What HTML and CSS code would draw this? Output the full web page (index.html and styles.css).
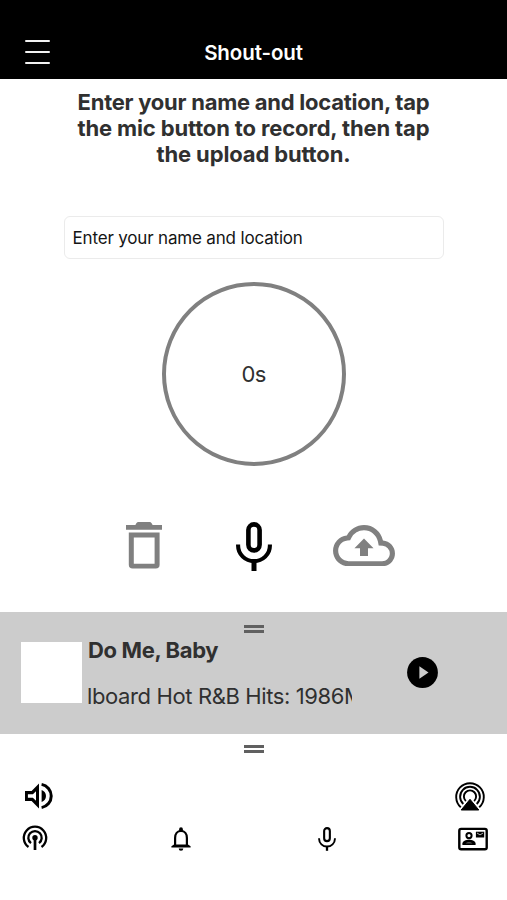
FILE: index.html
```html
<!DOCTYPE html>
<html lang="en">
<head>
<meta charset="utf-8">
<title>Shout-out</title>
<link rel="stylesheet" href="styles.css">
</head>
<body>
<header class="header">
  <div class="menu"><span></span><span></span><span></span></div>
  <h1 class="title">Shout-out</h1>
</header>
<main class="recorder">
  <p class="prompt"><span class="l1">Enter your name and location, tap</span><br><span class="l2">the mic button to record, then tap</span><br><span class="l3">the upload button.</span></p>
  <div class="field"><span>Enter your name and location</span></div>
  <div class="dial"><span>0s</span></div>
  <div class="controls">
    <svg class="trash" viewBox="0 0 36 47"><path fill="#808080" d="M0 3h9.4c1-2.4 2.2-2.9 3.4-2.9h10.4c1.2 0 2.4.5 3.4 2.9H36v4.8H0z"/><path fill="#808080" fill-rule="evenodd" d="M2.8 10.5h30.8v32.2a3.8 3.8 0 0 1-3.8 3.8H6.6a3.8 3.8 0 0 1-3.8-3.8zM7.8 15.5v26.2h20.8V15.5z"/></svg>
    <svg class="mic" viewBox="0 0 36 49" fill="none" stroke="#000"><rect x="12.4" y="2.4" width="11.2" height="26" rx="5.6" stroke-width="4.6"/><path d="M2.1 22.5v1.3a15.9 15.3 0 0 0 31.8 0v-1.3" stroke-width="4.1"/><path d="M18 38v11" stroke-width="5"/></svg>
    <svg class="cloud" viewBox="0 0 24 16"><path fill="#808080" d="M19.35 6.04A7.49 7.49 0 0 0 12 0C9.11 0 6.6 1.64 5.35 4.04A5.994 5.994 0 0 0 0 10c0 3.31 2.69 6 6 6h13c2.76 0 5-2.24 5-5 0-2.64-2.05-4.78-4.65-4.96zM19 14H6c-2.21 0-4-1.79-4-4 0-2.05 1.53-3.76 3.56-3.97l1.07-.11.5-.95A5.469 5.469 0 0 1 12 2c2.62 0 4.88 1.86 5.39 4.43l.3 1.5 1.53.11A2.98 2.98 0 0 1 22 11c0 1.65-1.35 3-3 3zM8.3 9h2.15v3h3.1V9h2.15L12 5.2z"/></svg>
  </div>
</main>
<section class="player">
  <div class="handle"></div>
  <div class="art"></div>
  <div class="track"><div class="song">Do Me, Baby</div><div class="marquee"><span>lboard Hot R&amp;B Hits: 1986M</span></div></div>
  <svg class="play" viewBox="0 0 31 31"><circle cx="15.5" cy="15.5" r="15.4"/><path fill="#ccc" d="M12.4 9.2v12.6l9.1-6.3z"/></svg>
</section>
<footer class="dock">
  <div class="handle"></div>
  <div class="row top">
    <svg class="speaker" width="28" height="28" viewBox="0 0 28 28"><path d="M0 9H6.6L14 1.6v25L6.6 19H0z"/><path d="M2.9 12.2h5L11 9.2v9.6l-3.1-3H2.9z" fill="#fff"/><path d="M16.6 8a6.6 6.6 0 0 1 4.4 6 6.6 6.6 0 0 1-4.4 6z"/><path d="M16.6 2.4a11.8 11.8 0 0 1 0 23.2" fill="none" stroke="#000" stroke-width="3"/></svg>
    <svg class="airplay" width="30" height="29" viewBox="0 0 30 29" fill="none" stroke="#000" stroke-width="1.9"><path d="M5.8 25.3a13.8 13.8 0 1 1 18.4 0"/><path d="M8.3 22a9.9 9.9 0 1 1 13.4 0"/><path d="M10.9 19a6.1 6.1 0 1 1 8.2 0"/><path d="M15 17.3L23.8 28H6.2z" fill="#000" stroke-width="1"/></svg>
  </div>
  <div class="row tabs">
    <svg class="podcast" width="26" height="26" viewBox="0 0 26 26" fill="none" stroke="#000"><path d="M6.5 22a11.2 11.2 0 1 1 13 0" stroke-width="2.3"/><path d="M9 18.2a6.7 6.7 0 1 1 8 0" stroke-width="2.3"/><circle cx="13" cy="12.7" r="2.7" fill="#000" stroke="none"/><path d="M13 13v12" stroke-width="2.7"/></svg>
    <svg class="bell" width="20" height="24" viewBox="0 0 20 24"><path d="M4.1 19V11c0-4 2.2-7 5.9-7s5.9 3 5.9 7v8" fill="none" stroke="#000" stroke-width="2.2"/><path d="M8.1 4V2.2a1.9 1.9 0 0 1 3.8 0V4zM.4 19.2l2.6-1.8h14l2.6 1.8v1.2H.4zM7.7 21.5h4.6a2.3 2.3 0 0 1-4.6 0z"/></svg>
    <svg class="minimic" width="18" height="24" viewBox="0 0 36 48" fill="none" stroke="#000"><rect x="12.3" y="2.2" width="11.4" height="26" rx="5.7" stroke-width="4.2"/><path d="M2.2 22.5v1.3a15.8 15.3 0 0 0 31.6 0v-1.3" stroke-width="3.8"/><path d="M18 38v9.6" stroke-width="4.6"/></svg>
    <svg class="contact" width="30" height="24" viewBox="0 0 30 24"><rect x="1.3" y="1.9" width="27.4" height="20.4" rx="1.8" fill="none" stroke="#000" stroke-width="2.4"/><circle cx="11" cy="8.6" r="2.6" fill="none" stroke="#000" stroke-width="2"/><path d="M4.4 18.1v-1.6c0-2.5 3.6-3.8 6.6-3.8s6.6 1.3 6.6 3.8v1.6z"/><path d="M7.6 16.3c1-1.1 5.8-1.1 6.8 0z" fill="#999"/><path d="M17.9 4.7h8.3v5.8h-8.3z"/><path d="M19 6l3 1.9L25.1 6" fill="none" stroke="#ddd" stroke-width=".8"/></svg>
  </div>
</footer>
</body>
</html>
```

FILE: styles.css
```css
* { box-sizing: border-box; }
body { margin: 0; width: 507px; height: 900px; overflow: hidden; background: #fff; color: #303030; font-family: Inter, "Liberation Sans", sans-serif; display: flex; flex-direction: column; }
svg { display: block; flex: none; }
.header { height: 79px; flex: none; background: #000; color: #fff; display: grid; grid-template-columns: 75px 1fr 75px; padding-top: 40px; }
.menu { display: flex; flex-direction: column; gap: 9px; padding-left: 25px; }
.menu span { width: 25px; height: 2px; background: #f2f2f2; border-radius: 1px; }
.title { margin: 0; font-size: 20.5px; line-height: 26px; font-weight: 600; letter-spacing: -0.1px; text-align: center; }
.recorder { height: 533px; flex: none; display: flex; flex-direction: column; align-items: center; }
.prompt { margin: 10px 0 0; font-size: 22px; line-height: 26px; font-weight: 700; text-align: center; white-space: nowrap; }
.l1 { letter-spacing: -0.25px; }
.l2, .l3 { letter-spacing: -0.14px; }
.field { width: 380px; height: 43px; margin-top: 49px; border: 1px solid #ebebeb; border-radius: 6px; color: #151515; font-size: 17px; line-height: 42px; letter-spacing: -0.17px; padding-left: 8px; }
.dial { width: 184px; height: 184px; margin-top: 23px; border: 4px solid #808080; border-radius: 50%; display: flex; align-items: center; justify-content: center; font-size: 22px; letter-spacing: -0.7px; }
.controls { display: flex; width: 507px; padding-left: 126px; margin-top: 56px; }
.trash { width: 36px; height: 47px; }
.mic { width: 36px; height: 49px; margin-left: 74px; }
.cloud { width: 62px; height: 41.3px; margin: 3px 0 0 61px; }
.player { height: 122px; flex: none; background: #ccc; display: grid; grid-template: 30px 92px / 88px 264px 1fr; }
.handle { width: 20px; height: 8px; border-top: 3px solid #606060; border-bottom: 3px solid #606060; }
.player .handle { grid-area: 1 / 1 / 2 / 4; justify-self: center; margin-top: 13px; }
.art { width: 61px; height: 61px; background: #fff; margin-left: 21px; }
.song { font-size: 22px; line-height: 26px; font-weight: 700; letter-spacing: -0.36px; margin-top: -5px; }
.marquee { width: 265px; margin: 19px 0 0 -1px; overflow: hidden; white-space: nowrap; font-size: 22px; line-height: 28px; letter-spacing: -0.38px; }
.play { width: 31px; height: 31px; margin: 15px 0 0 55px; }
.dock { flex: 1; padding-top: 11px; }
.dock .handle { margin: 0 auto; }
.row { display: flex; justify-content: space-between; }
.top { padding: 29px 22px 0 25px; }
.tabs { padding: 15px 19px 0 22px; align-items: center; }
.bell { margin-right: 2px; }
.minimic { margin: 0 -1px 0 2px; }
.podcast { margin-top: -1px; }
```
